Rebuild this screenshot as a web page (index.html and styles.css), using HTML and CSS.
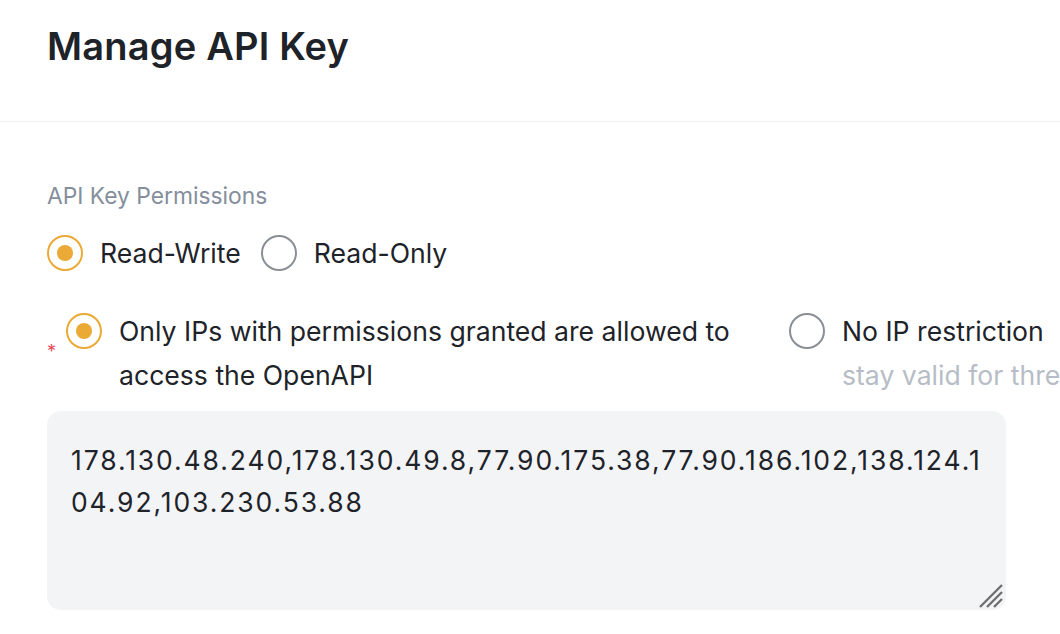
FILE: index.html
```html
<!DOCTYPE html>
<html>
<head>
<meta charset="utf-8">
<link rel="stylesheet" href="styles.css">
</head>
<body>
<div class="page">
  <header class="header">
    <h1 class="title">Manage API Key</h1>
  </header>
  <main class="content">
    <div class="label">API Key Permissions</div>
    <div class="radio-row">
      <label class="radio"><span class="dot checked"></span><span class="radio-text">Read-Write</span></label>
      <label class="radio"><span class="dot"></span><span class="radio-text">Read-Only</span></label>
    </div>
    <div class="ip-row">
      <span class="required">*</span>
      <label class="radio ip-option ip-left"><span class="dot checked"></span><span class="radio-text">Only IPs with permissions granted are allowed to access the OpenAPI</span></label>
      <label class="radio ip-option ip-right"><span class="dot"></span><span class="radio-text">No IP restriction<span class="hint">stay valid for three months</span></span></label>
    </div>
    <div class="textarea-wrap">
      <div class="textarea">178.130.48.240,178.130.49.8,77.90.175.38,77.90.186.102,138.124.104.92,103.230.53.88</div>
      <svg class="resize" width="26" height="26" viewBox="0 0 26 26">
        <path d="M2 24 L24 2 M9 24 L24 9 M16 24 L24 16" stroke="#707070" stroke-width="2.4" fill="none"/>
      </svg>
    </div>
  </main>
</div>
</body>
</html>
```
FILE: styles.css
```css
html, body {
  margin: 0;
  padding: 0;
  background: #ffffff;
}
body {
  font-family: "Inter", "Noto Sans", sans-serif;
  color: #1e2329;
  overflow: hidden;
  width: 1060px;
  height: 634px;
}
.page {
  width: 1060px;
  height: 634px;
  overflow: hidden;
}
.header {
  height: 121px;
  border-bottom: 1px solid #eef0f2;
  padding: 0 47px;
}
.title {
  margin: 0;
  padding-top: 21px;
  font-size: 38px;
  line-height: 50px;
  font-weight: 600;
  color: #1e2329;
  letter-spacing: 0.2px;
}
.content {
  padding: 0 0 0 47px;
}
.label {
  margin-top: 58px;
  font-size: 22.8px;
  line-height: 32px;
  color: #848e9c;
}
.radio-row {
  display: flex;
  gap: 20px;
  margin-top: 23px;
  align-items: center;
}
.radio {
  display: flex;
  align-items: flex-start;
  gap: 17px;
  font-size: 26.6px;
  line-height: 36px;
  color: #1e2329;
}
.dot {
  flex: none;
  width: 36px;
  height: 36px;
  box-sizing: border-box;
  border: 2px solid #8a8f96;
  border-radius: 50%;
  position: relative;
}
.dot.checked {
  border-color: #eba935;
}
.dot.checked::after {
  content: "";
  position: absolute;
  left: 8px;
  top: 8px;
  width: 16px;
  height: 16px;
  border-radius: 50%;
  background: #eba935;
}
.ip-row {
  display: flex;
  margin-top: 38px;
  align-items: flex-start;
}
.required {
  color: #e5505d;
  font-size: 18px;
  line-height: 18px;
  margin-top: 34px;
  width: 19px;
  flex: none;
}
.ip-option {
  line-height: 44px;
}
.ip-option .dot {
  margin-top: 4px;
}
.ip-left {
  width: 686px;
  flex: none;
}
.ip-right {
  margin-left: 37px;
  white-space: nowrap;
}
.hint {
  display: block;
  color: #b7bdc6;
}
.textarea-wrap {
  position: relative;
  margin-top: 14px;
  width: 959px;
  height: 199px;
  background: #f3f4f6;
  border-radius: 14px;
}
.textarea {
  padding: 28px 20px 0 24px;
  font-size: 26.5px;
  line-height: 42px;
  letter-spacing: 1.9px;
  word-break: break-all;
  color: #1e2329;
}
.resize {
  position: absolute;
  right: 2px;
  bottom: 1px;
}
```
